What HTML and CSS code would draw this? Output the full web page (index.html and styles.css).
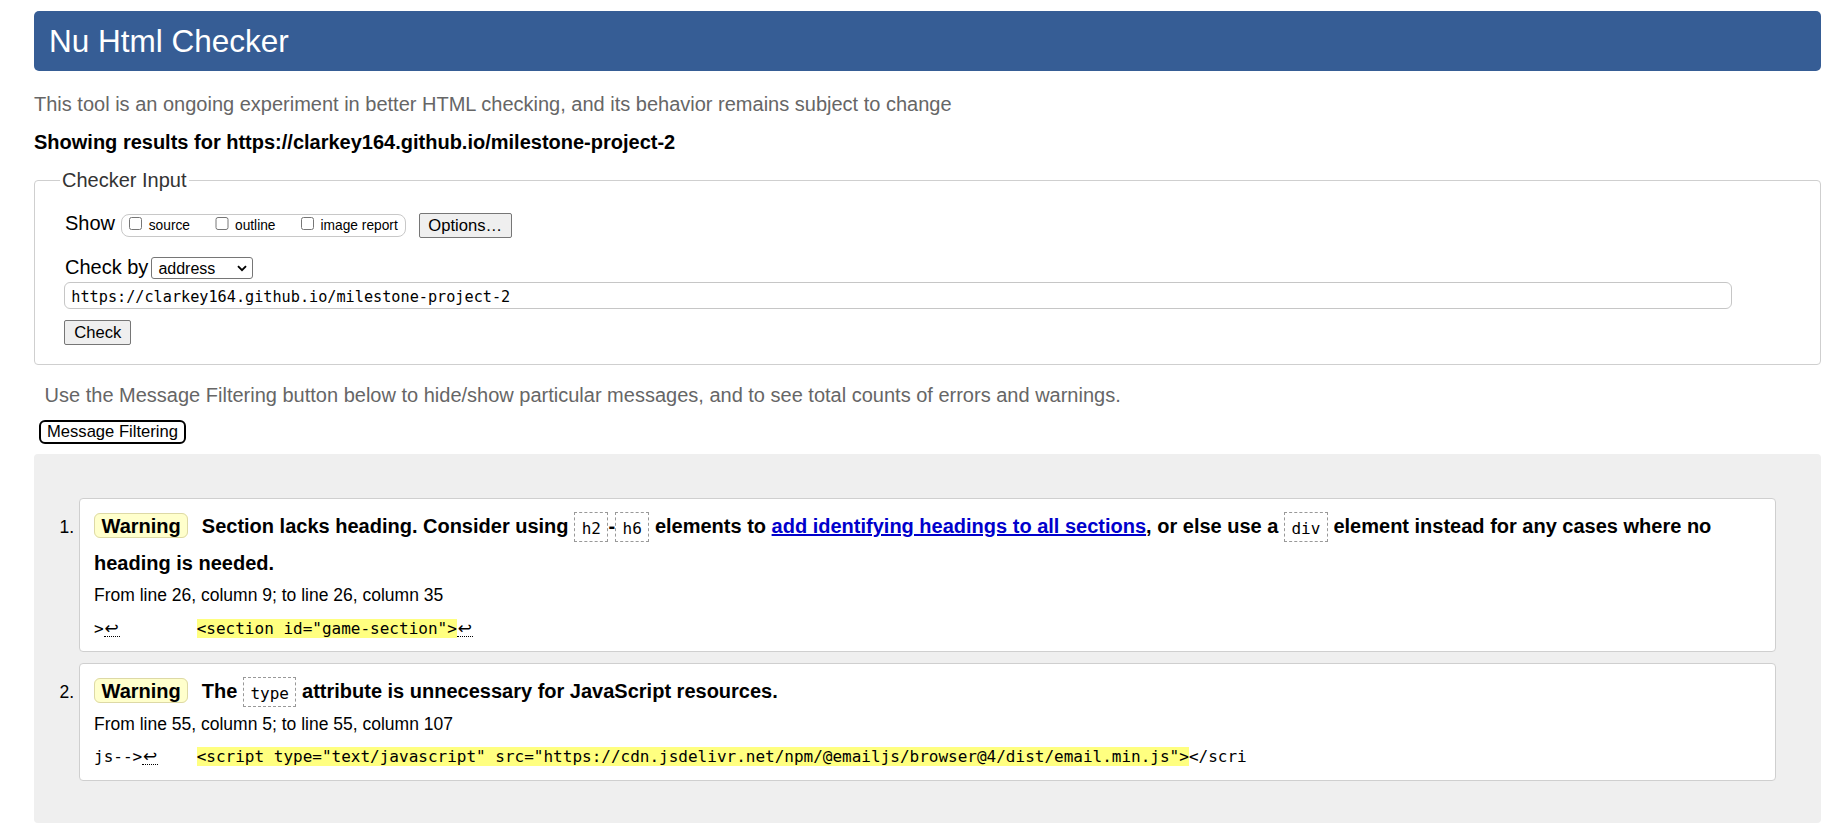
FILE: index.html
```html
<!DOCTYPE html>
<html lang="en">
<head>
<meta charset="utf-8">
<title>Showing results for https://clarkey164.github.io/milestone-project-2 - Nu Html Checker</title>
<link rel="stylesheet" href="styles.css">
</head>
<body>
<h1 class="title">Nu Html Checker</h1>
<p class="intro">This tool is an ongoing experiment in better HTML checking, and its behavior remains subject to change</p>
<p class="showing">Showing results for https://clarkey164.github.io/milestone-project-2</p>
<form class="checker-form">
<fieldset class="checker">
<legend>Checker Input</legend>
<div class="show-row">
<span class="show-lbl">Show</span>
<span class="opts"><label><input type="checkbox">source</label><label><input type="checkbox">outline</label><label><input type="checkbox">image report</label></span>
<button type="button" class="btn options">Options…</button>
</div>
<div class="by-row">
<span class="by-lbl">Check by</span>
<span class="sel-wrap"><select><option>address</option></select><svg class="chev" width="10" height="7" viewBox="0 0 10 7"><path d="M1 1.2 L5 5.2 L9 1.2" fill="none" stroke="#000" stroke-width="1.9"/></svg></span>
</div>
<input class="url" type="url" value="https://clarkey164.github.io/milestone-project-2">
<button type="button" class="btn check">Check</button>
</fieldset>
</form>
<p class="filter-note">Use the Message Filtering button below to hide/show particular messages, and to see total counts of errors and warnings.</p>
<button type="button" class="filter-btn">Message Filtering</button>
<div class="results">
<ol class="msgs">
<li class="msg">
<p class="head"><span class="badge">Warning</span> Section lacks heading. Consider using <code>h2</code>-<code>h6</code> elements to <a href="#">add identifying headings to all sections</a>, or else use a <code>div</code> element instead for any cases where no heading is needed.</p>
<p class="loc">From line 26, column 9; to line 26, column 35</p>
<p class="extract"><code>&gt;<span class="lf">↩</span>        <mark>&lt;section id="game-section"&gt;</mark><span class="lf">↩</span></code></p>
</li>
<li class="msg">
<p class="head"><span class="badge">Warning</span> The <code>type</code> attribute is unnecessary for JavaScript resources.</p>
<p class="loc">From line 55, column 5; to line 55, column 107</p>
<p class="extract"><code>js--&gt;<span class="lf">↩</span>    <mark>&lt;script type="text/javascript" src="https://cdn.jsdelivr.net/npm/@emailjs/browser@4/dist/email.min.js"&gt;</mark>&lt;/scri</code></p>
</li>
</ol>
</div>
</body>
</html>
```

FILE: styles.css
```css
* {
  box-sizing: border-box;
}

html {
  background: #fff;
}

body {
  margin: 0;
  padding: 0 26px 0 34px;
  font-family: "Liberation Sans", Arial, sans-serif;
  font-size: 20px;
  color: #000;
}

.title {
  margin: 11px 0 0;
  height: 60px;
  line-height: 60px;
  padding: 0 15px;
  background: #365d95;
  color: #fff;
  font-size: 31.5px;
  font-weight: normal;
  border-radius: 5px;
}

.intro {
  margin: 21.5px 0 15.3px;
  line-height: 23px;
  color: #666;
}

.showing {
  margin: 0;
  line-height: 23px;
  font-weight: bold;
}

.checker-form {
  margin: 0;
}

.checker {
  margin: 15px 0 0;
  padding: 21px 30px 18.5px;
  border: 1px solid #cfcfcf;
  border-radius: 4px;
  min-width: 0;
}

.checker legend {
  margin-left: -5px;
  padding: 0 2px;
  line-height: 23px;
  color: #333;
}

.show-row {
  display: flex;
  align-items: center;
  height: 26px;
}

.show-lbl {
  margin-bottom: 4px;
}

.opts {
  margin-left: 5.7px;
  height: 23.3px;
  border: 1px solid #c8c8c8;
  border-radius: 8px;
  padding: 0 7px;
  font-size: 13.75px;
  line-height: 21.3px;
  white-space: nowrap;
}

.opts input {
  width: 13.5px;
  height: 13.5px;
  margin: 0 6.5px 0 0;
  vertical-align: baseline;
}

.opts label + label {
  margin-left: 25px;
}

.btn {
  font-family: "Liberation Sans", Arial, sans-serif;
  font-size: 16.6px;
  color: #000;
  background: #efefef;
  border: 1px solid #767676;
  border-radius: 2px;
}

.options {
  margin-left: 13px;
  height: 25.4px;
  padding: 0 8.6px;
}

.by-row {
  display: flex;
  align-items: center;
  height: 22.4px;
  margin-top: 18.3px;
}

.by-lbl {
  margin-bottom: 2px;
}

.sel-wrap {
  display: inline-grid;
  margin-left: 3px;
}

.sel-wrap > * {
  grid-area: 1 / 1;
}

.sel-wrap select {
  appearance: none;
  -webkit-appearance: none;
  width: 102px;
  height: 22.4px;
  border: 1px solid #767676;
  border-radius: 3px;
  background: #fff;
  font-family: "Liberation Sans", Arial, sans-serif;
  font-size: 16px;
  padding: 0 0 0 6px;
  color: #000;
}

.chev {
  justify-self: end;
  align-self: center;
  margin-right: 6px;
  pointer-events: none;
}

.url {
  display: block;
  width: 1668px;
  height: 27px;
  margin: 3px 0 0 -0.7px;
  padding: 3px 6px 0;
  border: 1px solid #c6c6c6;
  border-radius: 6px;
  font-family: "DejaVu Sans Mono", "Liberation Mono", monospace;
  font-size: 15.2px;
  color: #000;
  background: #fff;
}

.check {
  display: block;
  margin: 11px 0 0 -0.7px;
  height: 25px;
  padding: 0 9px;
}

.filter-note {
  margin: 19px 0 0 10.6px;
  line-height: 23px;
  color: #666;
}

.filter-btn {
  display: block;
  margin: 12.8px 0 0 5px;
  height: 24px;
  padding: 0 6px;
  border: 2px solid #000;
  border-radius: 6px;
  background: #fff;
  color: #000;
  font-family: "Liberation Sans", Arial, sans-serif;
  font-size: 16.6px;
}

.results {
  margin-top: 10.7px;
  background: #efefef;
  border-radius: 4px;
  padding: 43.7px 0 42.3px;
}

.msgs {
  margin: 0;
  padding: 0 45px;
}

.msg {
  font-size: 17.5px;
  background: #fff;
  border: 1px solid #cfcfcf;
  border-radius: 4px;
  padding: 9px 14px 13.5px;
}

.msg + .msg {
  margin-top: 11px;
}

.msg p {
  margin: 0;
}

.head {
  font-size: 20px;
  font-weight: bold;
  line-height: 36.5px;
}

.badge {
  padding: 1px 6.5px 0;
  margin-right: 8px;
  background: #ffffcc;
  border: 1px solid #ddd9a6;
  border-radius: 6px;
}

.head code {
  font-family: "DejaVu Sans Mono", "Liberation Mono", monospace;
  font-size: 16px;
  font-weight: normal;
  line-height: 16px;
  padding: 5.5px 6.5px 3.5px;
  border: 1px dashed #999;
}

.head a {
  color: #0000cc;
  text-decoration: underline;
}

.msg .loc {
  margin-top: 4px;
  line-height: 20px;
}

.msg .extract {
  margin-top: 12.5px;
  line-height: 20px;
  white-space: pre;
}

.extract code {
  font-family: "DejaVu Sans Mono", "Liberation Mono", monospace;
  font-size: 16px;
  line-height: 16px;
}

.extract mark {
  background: #ffff80;
  color: #000;
}

.lf {
  display: inline-block;
  width: 16px;
  font-family: "DejaVu Sans", sans-serif;
  font-size: 17px;
  line-height: 16px;
  text-align: center;
  border-bottom: 1px dotted #000;
}
```
